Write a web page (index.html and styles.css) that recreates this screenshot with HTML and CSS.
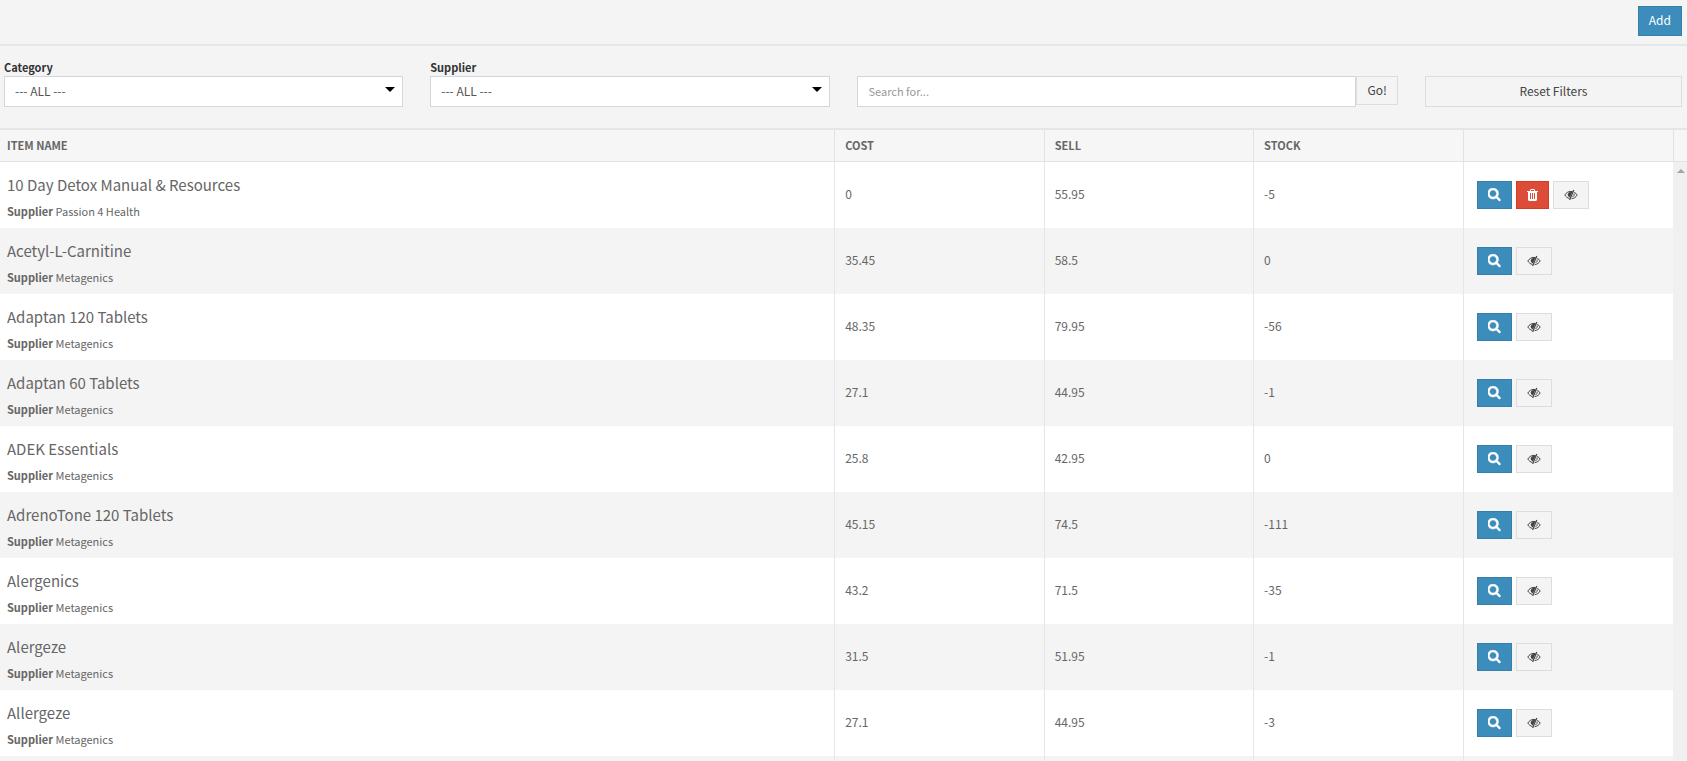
FILE: index.html
```html
<!DOCTYPE html>
<html lang="en">
<head>
    <meta charset="UTF-8">
    <meta name="viewport" content="width=device-width, initial-scale=1">
    <title>Items</title>
    <link rel="stylesheet" href="styles.css">
    <script src="items.js" defer></script>
</head>
<body>
    <svg class="sprite" aria-hidden="true">
        <symbol id="icon-search" viewBox="64 64 1664 1664">
            <path d="M1152 704q0-185-131.5-316.5t-316.5-131.5-316.5 131.5-131.5 316.5 131.5 316.5 316.5 131.5 316.5-131.5 131.5-316.5zm512 832q0 52-38 90t-90 38q-54 0-90-38l-343-342q-179 124-399 124-143 0-273.5-55.5t-225-150-150-225-55.5-273.5 55.5-273.5 150-225 225-150 273.5-55.5 273.5 55.5 225 150 150 225 55.5 273.5q0 220-124 399l343 343q37 37 37 90z" stroke="currentColor" stroke-width="60"/>
        </symbol>
        <symbol id="icon-trash" viewBox="192 128 1408 1536">
            <path d="M704 1376v-704q0-14-9-23t-23-9h-64q-14 0-23 9t-9 23v704q0 14 9 23t23 9h64q14 0 23-9t9-23zm256 0v-704q0-14-9-23t-23-9h-64q-14 0-23 9t-9 23v704q0 14 9 23t23 9h64q14 0 23-9t9-23zm256 0v-704q0-14-9-23t-23-9h-64q-14 0-23 9t-9 23v704q0 14 9 23t23 9h64q14 0 23-9t9-23zm-544-992h448l-48-117q-7-9-17-11h-317q-10 2-17 11zm928 32v64q0 14-9 23t-23 9h-96v948q0 83-47 143.5t-113 60.5h-832q-66 0-113-58.5t-47-141.5v-952h-96q-14 0-23-9t-9-23v-64q0-14 9-23t23-9h309l70-167q15-37 54-63t79-26h320q40 0 79 26t54 63l70 167h309q14 0 23 9t9 23z"/>
        </symbol>
        <symbol id="icon-hide" viewBox="0 0 14 14">
            <g fill="none" stroke="currentColor">
                <path d="M5.400 10.500C3.400 10 1.800 8.700.8 7 2.100 4.900 4.200 3.400 7 3.400 7.600 3.400 8.100 3.500 8.600 3.600"/>
                <path d="M10.300 4.300C11.500 4.900 12.500 5.900 13.200 7 12 9 10.200 10.400 7.600 10.600"/>
                <path d="M10.200 5.500Q10.700 7.600 8.500 9"/>
                <path d="M9.800 2 5.600 12.100" stroke-width="1.200"/>
            </g>
            <path d="M8.400 3.700 6 9.400C4.600 9 3.700 8 3.700 6.600 3.700 4.800 5.600 3.300 8.400 3.700z"/>
        </symbol>
    </svg>

    <div class="toolbar">
        <button type="button" class="btn btn-primary">Add</button>
    </div>

    <form class="filters">
        <div class="filter">
            <label for="category">Category</label>
            <div class="select">
                <select id="category"><option>--- ALL ---</option></select>
            </div>
        </div>
        <div class="filter">
            <label for="supplier">Supplier</label>
            <div class="select">
                <select id="supplier"><option>--- ALL ---</option></select>
            </div>
        </div>
        <div class="filter filter-search">
            <input type="text" id="search" placeholder="Search for..." aria-label="Search for">
            <button type="button" class="btn btn-default">Go!</button>
        </div>
        <div class="filter filter-reset">
            <button type="reset" class="btn btn-default">Reset Filters</button>
        </div>
    </form>

    <div class="list">
        <table class="items">
            <colgroup>
                <col>
                <col class="col-small">
                <col class="col-small">
                <col class="col-small">
                <col class="col-small">
            </colgroup>
            <thead>
                <tr>
                    <th>ITEM NAME</th>
                    <th>COST</th>
                    <th>SELL</th>
                    <th>STOCK</th>
                    <th></th>
                </tr>
            </thead>
            <tbody id="rows"></tbody>
        </table>
        <div class="scroll">
            <div class="scroll-head"></div>
            <div class="scroll-track"><span class="scroll-up"></span></div>
        </div>
    </div>
</body>
</html>
```
FILE: items.js
```js
var items = [
    ['10 Day Detox Manual & Resources', 'Passion 4 Health', '0', '55.95', '-5', true],
    ['Acetyl-L-Carnitine', 'Metagenics', '35.45', '58.5', '0'],
    ['Adaptan 120 Tablets', 'Metagenics', '48.35', '79.95', '-56'],
    ['Adaptan 60 Tablets', 'Metagenics', '27.1', '44.95', '-1'],
    ['ADEK Essentials', 'Metagenics', '25.8', '42.95', '0'],
    ['AdrenoTone 120 Tablets', 'Metagenics', '45.15', '74.5', '-111'],
    ['Alergenics', 'Metagenics', '43.2', '71.5', '-35'],
    ['Alergeze', 'Metagenics', '31.5', '51.95', '-1'],
    ['Allergeze', 'Metagenics', '27.1', '44.95', '-3']
];

function button(type, icon, title) {
    return '<button type="button" class="btn btn-icon btn-' + type + '" aria-label="' + title + '">' +
        '<svg class="icon icon-' + icon + '"><use href="#icon-' + icon + '"/></svg></button>';
}

var html = '';
items.forEach(function (item) {
    html += '<tr>' +
        '<td><h4>' + item[0].replace('&', '&amp;') + '</h4><p><b>Supplier</b> ' + item[1] + '</p></td>' +
        '<td>' + item[2] + '</td>' +
        '<td>' + item[3] + '</td>' +
        '<td>' + item[4] + '</td>' +
        '<td><div class="actions">' +
        button('primary', 'search', 'View') +
        (item[5] ? button('danger', 'trash', 'Delete') : '') +
        button('default', 'hide', 'Hide') +
        '</div></td></tr>';
});
html += '<tr><td></td><td></td><td></td><td></td><td></td></tr>';
document.getElementById('rows').innerHTML = html;
```
FILE: styles.css
```css
* {
    box-sizing: border-box;
}

body {
    margin: 0;
    height: 100vh;
    overflow: hidden;
    display: flex;
    flex-direction: column;
    background: #f4f4f4;
    color: #666;
    font: 12px/20px "Source Sans Pro", "Noto Sans CJK SC", sans-serif;
}

.sprite {
    display: none;
}

button, input, select {
    font: inherit;
}

/* top bar */
.toolbar {
    flex: none;
    display: flex;
    justify-content: flex-end;
    padding: 6px 5px 8px;
    border-bottom: 2px solid #e6e6e6;
}

.btn {
    border: 1px solid #ddd;
    padding: 0 10px 2px;
    height: 30px;
    line-height: 20px;
    text-align: center;
    cursor: pointer;
}
.btn-default {
    background: #f4f4f4;
    color: #444;
}
.btn-primary {
    background: #3c8dbc;
    border-color: #367fa9;
    color: #fff;
}
.btn-danger {
    background: #dd4b39;
    border-color: #d73925;
    color: #fff;
}

/* filters */
.filters {
    flex: none;
    display: grid;
    grid-template-columns: repeat(12, 1fr);
    column-gap: 27px;
    align-items: end;
    padding: 11px 5px 21px 4px;
    border-bottom: 2px solid #e6e6e6;
}
.filter {
    grid-column: span 3;
}
.filter label {
    display: block;
    height: 19px;
    color: #333;
    font-size: 11px;
    font-weight: bold;
}
.select {
    position: relative;
}
.select:after {
    content: "";
    position: absolute;
    top: 11px;
    right: 8px;
    border: 5px solid transparent;
    border-top-color: #000;
    border-bottom: 0;
    pointer-events: none;
}
.filter select,
.filter input {
    display: block;
    width: 100%;
    height: 31px;
    padding: 0 10px 2px;
    border: 1px solid #d2d6de;
    border-radius: 0;
    background: #fff;
    color: #555;
    -webkit-appearance: none;
    appearance: none;
}
.filter input {
    padding-left: 11px;
    font-size: 11px;
}
.filter input::placeholder {
    color: #999;
}
.filter-search {
    grid-column: span 4;
    display: flex;
    align-items: flex-start;
}
.filter-search input {
    flex: 1;
}
.filter-search .btn {
    height: 29px;
}
.filter-reset {
    grid-column: span 2;
}
.filter-reset .btn {
    display: block;
    width: 100%;
    height: 31px;
}

/* item list */
.list {
    flex: 1;
    min-height: 0;
    display: flex;
    overflow: hidden;
}
.items {
    flex: 1;
    align-self: flex-start;
    table-layout: fixed;
    border-collapse: separate;
    border-spacing: 0;
}
.col-small {
    width: 12.52%;
}
.items th {
    height: 32px;
    padding: 0 10px 2px;
    border-right: 1px solid #e2e2e2;
    border-bottom: 1px solid #e2e2e2;
    background: #f6f6f6;
    font-size: 11px;
    text-align: left;
}
.items th:last-child {
    border-right: 0;
}
.items td {
    height: 66px;
    padding: 0 10px 2px;
    border-right: 1px solid #e6e6e6;
    background: #fff;
}
.items tr:nth-child(even) td {
    background: #f4f4f4;
}
.items th:first-child,
.items td:first-child {
    padding-left: 7px;
}
.items td:last-child {
    padding: 0 0 0 13px;
    border-right: 0;
}
.items h4 {
    margin: 8px 0 6px;
    font-size: 15px;
    font-weight: normal;
    line-height: 20px;
}
.items p {
    margin: 0;
    font-size: 11px;
}

.actions {
    display: flex;
    gap: 4px;
}
.btn-icon {
    display: flex;
    align-items: center;
    height: 28px;
    padding: 0 10px;
}
.icon {
    display: block;
    width: 13px;
    height: 14px;
    fill: currentColor;
}
.icon-trash {
    width: 11px;
}
.icon-hide {
    width: 14px;
}

.scroll {
    flex: none;
    width: 14px;
    display: flex;
    flex-direction: column;
}
.scroll-head {
    height: 32px;
    border-left: 1px solid #e2e2e2;
    border-bottom: 1px solid #e2e2e2;
    background: #f6f6f6;
}
.scroll-track {
    flex: 1;
    padding: 7px 0 0 4px;
    background: #f0f0f0;
}
.scroll-up {
    display: block;
    width: 0;
    border: 4px solid transparent;
    border-top: 0;
    border-bottom-color: #a3a3a3;
}
```
